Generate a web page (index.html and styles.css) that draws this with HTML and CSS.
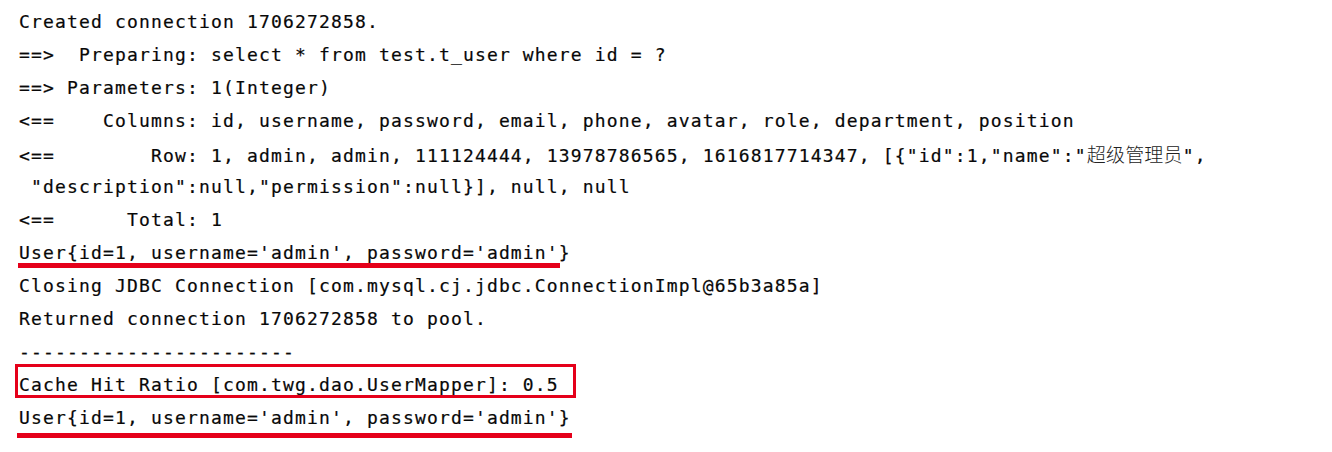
FILE: index.html
```html
<!DOCTYPE html>
<html lang="zh-CN">
<head>
<meta charset="utf-8">
<title>Console</title>
<link rel="stylesheet" href="styles.css">
</head>
<body>
<div class="console">
<div class="line">Created connection 1706272858.</div>
<div class="line">==&gt;  Preparing: select * from test.t_user where id = ?</div>
<div class="line">==&gt; Parameters: 1(Integer)</div>
<div class="line">&lt;==    Columns: id, username, password, email, phone, avatar, role, department, position</div>
<div class="line">&lt;==        Row: 1, admin, admin, 111124444, 13978786565, 1616817714347, [{"id":1,"name":"<span class="cjk">超级管理员</span>",</div>
<div class="line"> "description":null,"permission":null}], null, null</div>
<div class="line">&lt;==      Total: 1</div>
<div class="line"><span class="mark mark-first">User{id=1, username='admin', password='admin'}</span></div>
<div class="line">Closing JDBC Connection [com.mysql.cj.jdbc.ConnectionImpl@65b3a85a]</div>
<div class="line">Returned connection 1706272858 to pool.</div>
<div class="line">-----------------------</div>
<div class="line"><span class="mark mark-box">Cache Hit Ratio [com.twg.dao.UserMapper]: 0.5</span></div>
<div class="line"><span class="mark mark-last">User{id=1, username='admin', password='admin'}</span></div>
</div>
</body>
</html>
```
FILE: styles.css
```css
html, body {
  margin: 0;
  padding: 0;
  background: #ffffff;
}

.console {
  padding: 5px 0 13px 19px;
  font-family: "DejaVu Sans Mono", "JetBrains Mono", monospace;
  font-size: 18px;
  letter-spacing: 1.16px;
  line-height: 33px;
  color: #080808;
  -webkit-text-stroke: 0.2px #080808;
}

.line {
  height: 33px;
  white-space: pre;
}

.cjk {
  font-family: "Noto Sans CJK SC", sans-serif;
  font-size: 19px;
  font-weight: 300;
  letter-spacing: 0.2px;
  color: #222222;
  -webkit-text-stroke: 0;
}

.mark {
  display: inline-block;
  position: relative;
  height: 33px;
  vertical-align: top;
}

.mark::after {
  content: "";
  position: absolute;
  background: #e5001a;
}

.mark-first::after {
  left: -1px;
  right: 11px;
  top: 27px;
  height: 5px;
}

.mark-last::after {
  left: -2px;
  right: -1px;
  top: 32px;
  height: 5px;
}

.mark-box::after {
  left: -4px;
  right: -17px;
  top: -4px;
  height: 34px;
  background: transparent;
  border: 3px solid #e5001a;
  box-sizing: border-box;
}
```
